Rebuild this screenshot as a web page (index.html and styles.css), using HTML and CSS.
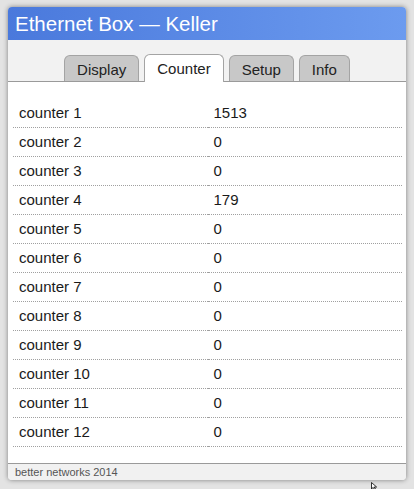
FILE: index.html
```html
<!DOCTYPE html>
<html>
<head>
<meta charset="utf-8">
<link rel="stylesheet" href="styles.css">
</head>
<body>
<div class="card">
  <div class="header">Ethernet Box — Keller</div>
  <div class="tabbar">
    <div class="tab">Display</div>
    <div class="tab active">Counter</div>
    <div class="tab">Setup</div>
    <div class="tab">Info</div>
  </div>
  <div class="content">
    <table class="grid">
      <tr><td>counter 1</td><td>1513</td></tr>
      <tr><td>counter 2</td><td>0</td></tr>
      <tr><td>counter 3</td><td>0</td></tr>
      <tr><td>counter 4</td><td>179</td></tr>
      <tr><td>counter 5</td><td>0</td></tr>
      <tr><td>counter 6</td><td>0</td></tr>
      <tr><td>counter 7</td><td>0</td></tr>
      <tr><td>counter 8</td><td>0</td></tr>
      <tr><td>counter 9</td><td>0</td></tr>
      <tr><td>counter 10</td><td>0</td></tr>
      <tr><td>counter 11</td><td>0</td></tr>
      <tr><td>counter 12</td><td>0</td></tr>
    </table>
  </div>
  <div class="footer">better networks 2014</div>
</div>
<svg class="cursor" width="8" height="8" viewBox="0 0 8 8"><path d="M0.5 0.5 L0.5 7 L2.2 5.4 L3.6 7.8 L4.6 7.3 L3.3 5 L5.6 5 Z" fill="#fff" stroke="#000" stroke-width="0.8"/></svg>
</body>
</html>
```
FILE: styles.css
```css
html, body {
  margin: 0;
  padding: 0;
}
body {
  background: #e3e3e3;
  font-family: "Liberation Sans", Arial, sans-serif;
  color: #111;
  height: 489px;
  overflow: hidden;
  position: relative;
}
.card {
  margin: 7px 8px 0 8px;
  width: 398px;
  background: #f2f2f2;
  border-radius: 4px;
  box-shadow: 0 0 5px rgba(0,0,0,0.45);
  overflow: hidden;
}
.header {
  height: 33px;
  box-sizing: border-box;
  padding: 5px 0 0 7px;
  font-size: 20.5px;
  line-height: 24px;
  color: #fff;
  background: linear-gradient(to right, #4a79dc, #6c9bef);
}
.tabbar {
  display: flex;
  justify-content: center;
  align-items: flex-end;
  gap: 5px;
  padding-top: 15px;
  height: 42px;
  box-sizing: border-box;
  border-bottom: 1px solid #9a9a9a;
}
.tab {
  height: 26px;
  box-sizing: border-box;
  padding: 0 12px;
  border: 1px solid #a4a4a4;
  border-bottom: none;
  border-radius: 6px 6px 0 0;
  background: #c8c8c8;
  font-size: 15px;
  line-height: 27px;
  color: #222;
}
.tab.active {
  background: #fff;
  height: 28px;
  margin-bottom: -1px;
  line-height: 28px;
  padding: 0 12px;
}
.content {
  background: #fff;
  padding: 16px 4px 16px 5px;
}
.grid {
  width: 100%;
  border-collapse: collapse;
  table-layout: fixed;
  font-size: 15px;
  color: #1a1a1a;
}
.grid td {
  width: 50%;
  height: 29px;
  box-sizing: border-box;
  padding: 0 6px;
  border-bottom: 1px dotted #a0a0a0;
  vertical-align: middle;
}
.footer {
  border-top: 1px solid #9a9a9a;
  background: #f1f1f1;
  height: 17px;
  box-sizing: border-box;
  padding: 1px 0 0 7px;
  font-size: 11px;
  line-height: 14px;
  color: #555;
}
.cursor {
  position: absolute;
  left: 371px;
  top: 482px;
}
```
